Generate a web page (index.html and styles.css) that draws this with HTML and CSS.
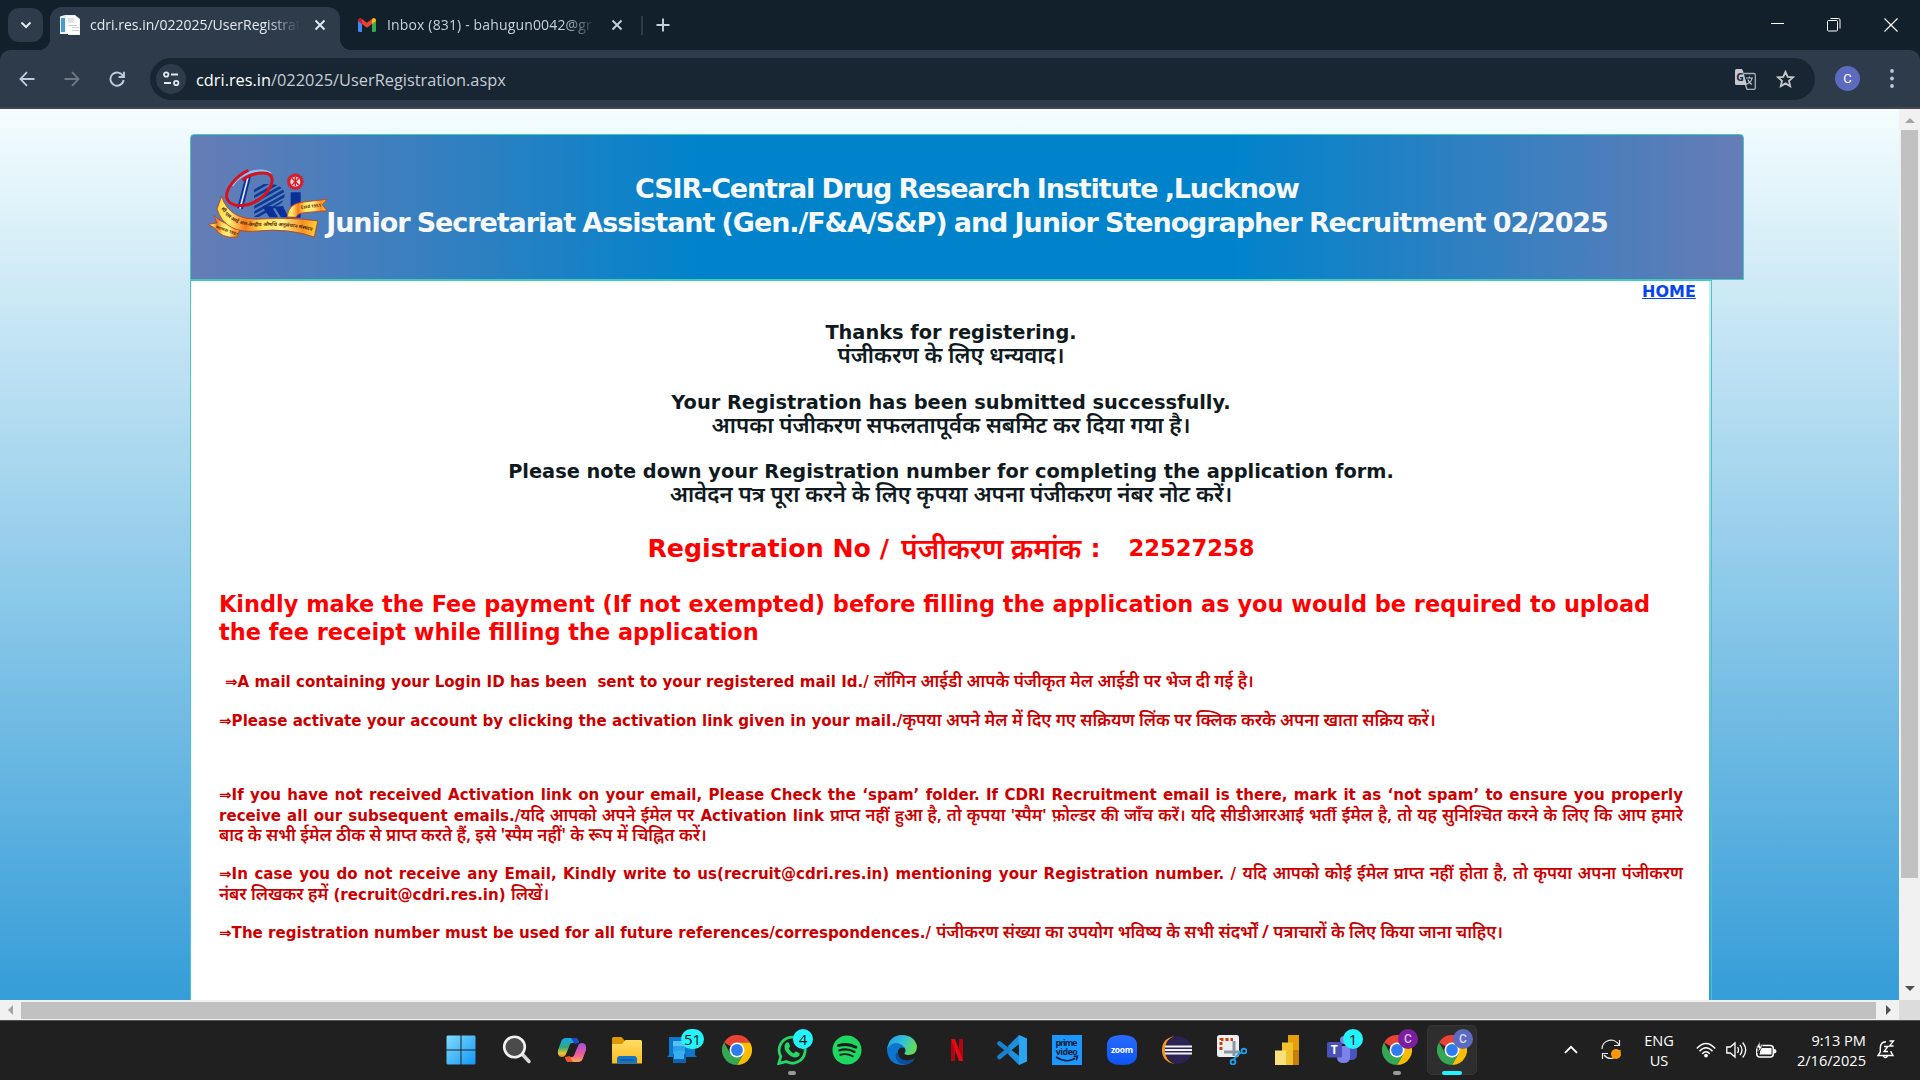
FILE: index.html
```html
<!DOCTYPE html>
<html lang="en">
<head>
<meta charset="utf-8">
<title>cdri.res.in/022025/UserRegistration.aspx</title>
<link rel="stylesheet" href="styles.css">
</head>
<body>
<svg class="defs" aria-hidden="true">
  <defs>
    <symbol id="chrome" viewBox="0 0 30 30">
      <path fill="#e94335" d="M15 15 2 7.5A15 15 0 0 1 28 7.5H15z"/>
      <path fill="#fbbc04" d="M28 7.5A15 15 0 0 1 15 30L21.5 18.700 15 7.500z"/>
      <path fill="#34a853" d="M2 7.500A15 15 0 0 0 15 30L21.500 18.750 8.500 18.750z"/>
      <circle cx="15" cy="15" r="7.500" fill="#fff"/>
      <circle cx="15" cy="15" r="5.900" fill="#2f7bf0"/>
    </symbol>
    <linearGradient id="winG" x1="0" y1="0" x2="1" y2="1"><stop offset="0" stop-color="#7fdcff"/><stop offset="1" stop-color="#1397f5"/></linearGradient>
    <linearGradient id="cpA" x1="0" y1="0" x2="0" y2="1"><stop offset="0" stop-color="#18a3e8"/><stop offset=".5" stop-color="#35a77c"/><stop offset=".8" stop-color="#e8c733"/><stop offset="1" stop-color="#f28a2c"/></linearGradient>
    <linearGradient id="cpB" x1="0" y1="0" x2="0" y2="1"><stop offset="0" stop-color="#a04fe6"/><stop offset=".6" stop-color="#ee5d94"/><stop offset="1" stop-color="#fba55e"/></linearGradient>
    <linearGradient id="foldG" x1="0" y1="0" x2="0" y2="1"><stop offset="0" stop-color="#ffdc63"/><stop offset="1" stop-color="#fbbd1e"/></linearGradient>
    <linearGradient id="edgeG" x1="0" y1="0" x2="1" y2="0.300"><stop offset="0" stop-color="#1b9de2"/><stop offset=".6" stop-color="#35c1d8"/><stop offset="1" stop-color="#62dc58"/></linearGradient>
    <linearGradient id="zoomG" x1="0" y1="0" x2="0" y2="1"><stop offset="0" stop-color="#2a6bff"/><stop offset="1" stop-color="#0b55f5"/></linearGradient>
    <linearGradient id="ribG" x1="0" y1="0" x2="1" y2="0"><stop offset="0" stop-color="#ffd83a"/><stop offset=".12" stop-color="#fff07a"/><stop offset=".28" stop-color="#f57c1c"/><stop offset=".45" stop-color="#ffe45c"/><stop offset=".65" stop-color="#fff08a"/><stop offset=".85" stop-color="#f78f1e"/><stop offset="1" stop-color="#ffd83a"/></linearGradient>
    <clipPath id="rClip"><path d="M177 87h50c26 0 42 16 42 32 0 18-12 30-28 34l38 34H178z"/></clipPath>
  </defs>
</svg>

<div class="window">
  <header class="tabstrip">
    <button class="tabsearch"><svg width="12" height="8" viewBox="0 0 12 8"><path d="M1.500 1.500 6 6l4.500-4.500" fill="none" stroke="#e3e9ef" stroke-width="2"/></svg></button>
    <div class="tab active">
      <svg class="fav" width="20" height="20" viewBox="0 0 20 20"><path fill="#eef1f3" d="M0 1.500L5 0h10l5 4v16H8v-1H0z"/><path fill="#4a9ad0" d="M1 3h4v14H1z"/><path fill="#fff" d="M6 1h9l4 4v14H8v-2H6z"/><path fill="#dfe3e7" d="M8 3h6v5H8z"/><path fill="#c9d0d6" d="M8 10h9v1H8zM12 12h7v1h-7zM12 15h7v1h-7z"/></svg>
      <span class="label">cdri.res.in/022025/UserRegistrat</span>
      <svg class="x" width="12" height="12" viewBox="0 0 12 12"><path d="M1.500 1.500l9 9m0-9l-9 9" stroke="#e3e9ef" stroke-width="1.900"/></svg>
    </div>
    <div class="tab">
      <svg class="fav gm" width="18" height="14" viewBox="0 0 18 14"><path fill="#4285f4" d="M0 2v10.500Q0 14 1.500 14H4V5z"/><path fill="#34a853" d="M18 2v10.500q0 1.500-1.500 1.500H14V5z"/><path fill="#c5221f" d="M0 2.500Q0 0 2.500 0L4 1v5L0 3z"/><path fill="#fbbc04" d="M18 2.500Q18 0 15.500 0L14 1v5l4-3z"/><path fill="#ea4335" d="M4 1l5 3.800L14 1v5L9 9.800 4 6z"/></svg>
      <span class="label dim">Inbox (831) - bahugun0042@gr</span>
      <svg class="x" width="12" height="12" viewBox="0 0 12 12"><path d="M1.500 1.500l9 9m0-9l-9 9" stroke="#c5d2de" stroke-width="1.900"/></svg>
    </div>
    <i class="tabdiv"></i>
    <svg class="plus" width="14" height="14" viewBox="0 0 14 14"><path d="M7 .5v13M.5 7h13" stroke="#c5d2de" stroke-width="1.900"/></svg>
    <div class="winctl">
      <svg width="13" height="13" viewBox="0 0 13 13"><path d="M0 5.500h13" stroke="#fff"/></svg>
      <svg width="14" height="14" viewBox="0 0 14 14"><path d="M.5 3.500q0-1 1-1H9.500q1 0 1 1v8.500q0 1-1 1H1.500q-1 0-1-1zM3.500.5H11.500q1.500 0 1.500 1.500V10.500" fill="none" stroke="#fff"/></svg>
      <svg width="14" height="14" viewBox="0 0 14 14"><path d="M.5.5l13 13m0-13l-13 13" stroke="#fff" stroke-width="1.200"/></svg>
    </div>
  </header>

  <nav class="toolbar">
    <svg class="nb" width="16" height="16" viewBox="0 0 16 16"><path d="M15.500 8H1.500M8 1.200 1.400 8 8 14.800" fill="none" stroke="#b9cbdd" stroke-width="1.800"/></svg>
    <svg class="nb" width="16" height="16" viewBox="0 0 16 16"><path d="M.5 8h14M8 1.200 14.600 8 8 14.800" fill="none" stroke="#6d7883" stroke-width="1.800"/></svg>
    <svg class="nb" width="16" height="16" viewBox="0 0 16 16"><path d="M14 5.200A6.600 6.600 0 1 0 14.600 9M15 .8V6H9.600" fill="none" stroke="#b9cbdd" stroke-width="1.900"/></svg>
    <div class="omnibox">
      <span class="site"><svg width="17" height="16" viewBox="0 0 17 16"><g fill="none" stroke="#e3e9ef" stroke-width="1.800"><circle cx="3.200" cy="3.500" r="2.200"/><path d="M8 3.500h7M1 12h7"/><circle cx="13.200" cy="12" r="2.200"/></g></svg></span>
      <span class="url"><b>cdri.res.in</b>/022025/UserRegistration.aspx</span>
      <svg class="gt" width="21" height="21" viewBox="0 0 21 21"><path fill="none" stroke="#a9b0b7" stroke-width="1.300" d="M9 4.500h10q1.300 0 1.300 1.300V19q0 1.300-1.300 1.300h-7L8 8"/><path fill="#c7c8cc" d="M1.500 0H7l1 2 4 14H1.500Q0 16 0 14.500v-13Q0 0 1.500 0z"/><text x="1.300" y="12" font-family="Open Sans" font-weight="700" font-size="10.500" fill="#182633">G</text><path d="M11 9h7m-3.500-1.500V9m2.500 0q-.5 4-5 6m.8-4.500q1 3.200 4.200 5" fill="none" stroke="#c7c8cc" stroke-width="1.100"/></svg>
      <svg class="star" width="19" height="18" viewBox="0 0 19 18"><path d="M9.500 1.800l2.200 5 5.400.5-4.100 3.600 1.200 5.300-4.700-2.800-4.700 2.800L6 10.900 1.900 7.300l5.400-.5z" fill="none" stroke="#c7c8cc" stroke-width="1.800"/></svg>
    </div>
    <span class="avatar">C</span>
    <svg class="dots" width="4" height="19" viewBox="0 0 4 19" fill="#b9cbdd"><circle cx="2" cy="2" r="1.900"/><circle cx="2" cy="9.500" r="1.900"/><circle cx="2" cy="17" r="1.900"/></svg>
  </nav>

  <div class="viewport">
    <main class="page">
      <div class="banner">
        <svg class="logo" width="150" height="100" viewBox="0 0 450 300">
          <g clip-path="url(#rClip)"><path d="M170 112l60-34M172 128l90-50M172 144l98-55M172 160l104-58M172 176l108-60M172 192l112-63" stroke="#0e3a96" stroke-width="8"/></g>
          <path fill="#0b2f9a" d="M203 155l26-2 20 34h-26zM238 155l26-2 16 34h-22zM287 112h30v76h-30z"/>
          <path d="M153 68l-24 92M165 66l-24 96" stroke="#0b2f9a" stroke-width="5"/><path d="M159 67l-24 94" stroke="#e8f0ff" stroke-width="4"/>
          <path d="M112 92C136 52 196 36 228 56" fill="none" stroke="#8ec5f5" stroke-width="7"/>
          <path d="M160 46C124 62 88 104 96 130c10 32 76 28 112-10 32-34 32-66-4-66-24 0-48 10-62 22" fill="none" stroke="#d8101c" stroke-width="9"/>
          <circle cx="301" cy="80" r="23" fill="#d81e2c" stroke="#d81e2c" stroke-width="5" stroke-dasharray="4 3"/><circle cx="301" cy="80" r="15" fill="#f6d9dc"/><path d="M291 70l20 20m0-20l-20 20M301 66v28" stroke="#d81e2c" stroke-width="4"/>
          <path fill="url(#ribG)" stroke="#c23a10" stroke-width="2.500" d="M276 186q4-42 50-45l70-8-14 16 14 18-68 6q-22 2-24 14z"/>
          <path fill="url(#ribG)" stroke="#c23a10" stroke-width="2.500" d="M58 182q30 32 78 30l-8 34q-50 6-70-28L40 208l26-4z"/>
          <path fill="url(#ribG)" stroke="#c23a10" stroke-width="2.500" d="M80 124q22 74 120 68 90-6 168 6l-10 48q-80-28-170-18Q90 238 66 162z"/>
          <path id="rib" d="M78 160q30 54 112 54 90-6 168 16" fill="none"/>
          <text class="ribtext" font-size="15"><textPath href="#rib">सी एस आई आर-केन्द्रीय औषधि अनुसंधान संस्थान</textPath></text>
          <text class="ribtext" font-size="13" transform="rotate(20 64 218)" x="62" y="220">स्थापना 1951</text>
          <text class="ribtext" font-size="13" transform="rotate(-6 322 162)" x="318" y="161">Estd 1951</text>
        </svg>
        <h1><span class="t1">CSIR-Central Drug Research Institute ,Lucknow</span><span class="t2">Junior Secretariat Assistant (Gen./F&amp;A/S&amp;P) and Junior Stenographer Recruitment 02/2025</span></h1>
      </div>

      <div class="panel"><div class="sheet">
        <a class="home" href="#">HOME</a>
        <div class="msg"><p>Thanks for registering.</p><p class="hi">पंजीकरण के लिए धन्यवाद।</p></div>
        <div class="msg"><p>Your Registration has been submitted successfully.</p><p class="hi">आपका पंजीकरण सफलतापूर्वक सबमिट कर दिया गया है।</p></div>
        <div class="msg"><p>Please note down your Registration number for completing the application form.</p><p class="hi">आवेदन पत्र पूरा करने के लिए कृपया अपना पंजीकरण नंबर नोट करें।</p></div>
        <div class="reg"><span>Registration No /</span><span class="rhi">पंजीकरण क्रमांक</span><span class="colon">:</span><span class="num">22527258</span></div>
        <div class="fee">Kindly make the Fee payment (If not exempted) before filling the application as you would be required to upload<br>the fee receipt while filling the application</div>
        <div class="note first">⇒A mail containing your Login ID has been&nbsp; sent to your registered mail Id./ <span>लॉगिन आईडी आपके पंजीकृत मेल आईडी पर भेज दी गई है।</span></div>
        <div class="note">⇒Please activate your account by clicking the activation link given in your mail./<span>कृपया अपने मेल में दिए गए सक्रियण लिंक पर क्लिक करके अपना खाता सक्रिय करें।</span></div>
        <div class="note gap">
          <div class="full">⇒If you have not received Activation link on your email, Please Check the ‘spam’ folder. If CDRI Recruitment email is there, mark it as ‘not spam’ to ensure you properly</div>
          <div class="full">receive all our subsequent emails./<span>यदि आपको अपने ईमेल पर</span> Activation link <span>प्राप्त नहीं हुआ है, तो कृपया 'स्पैम' फ़ोल्डर की जाँच करें। यदि सीडीआरआई भर्ती ईमेल है, तो यह सुनिश्चित करने के लिए कि आप हमारे</span></div>
          <div><span>बाद के सभी ईमेल ठीक से प्राप्त करते हैं, इसे 'स्पैम नहीं' के रूप में चिह्नित करें।</span></div>
        </div>
        <div class="note case">
          <div class="full">⇒In case you do not receive any Email, Kindly write to us(recruit@cdri.res.in) mentioning your Registration number. / <span>यदि आपको कोई ईमेल प्राप्त नहीं होता है, तो कृपया अपना पंजीकरण</span></div>
          <div><span>नंबर लिखकर हमें</span> (recruit@cdri.res.in) <span>लिखें।</span></div>
        </div>
        <div class="note">⇒The registration number must be used for all future references/correspondences./ <span>पंजीकरण संख्या का उपयोग भविष्य के सभी संदर्भों / पत्राचारों के लिए किया जाना चाहिए।</span></div>
      </div></div>
    </main>
    <div class="vbar"><i class="up"></i><i class="vthumb"></i><i class="down"></i></div>
  </div>
  <div class="hbar"><i class="left"></i><i class="hthumb"></i><i class="right"></i><i class="corner"></i></div>

  <footer class="taskbar">
    <div class="apps">
      <span class="app win"><svg width="30" height="30" viewBox="0 0 30 30"><path fill="url(#winG)" d="M1.500.5H14.500V14.500H.5V1.500zM15.500.5H28.500l1 1v13h-14zM.5 15.500h14v14H1.500l-1-1zM15.500 15.500h14v13l-1 1h-13z"/></svg></span>
      <span class="app"><svg width="30" height="30" viewBox="0 0 30 30"><path d="M20 19l7 7.500" stroke="#d5d9dd" stroke-width="3.500" stroke-linecap="round"/><circle cx="12.500" cy="12" r="10.300" fill="#4b4b4b" stroke="#f2f2f2" stroke-width="2.600"/></svg></span>
      <span class="app"><svg width="30" height="30" viewBox="0 0 30 30"><path fill="url(#cpA)" d="M9 3h9q3 0 4 5l-7 0q-2 0-3 4l-3 7q-1 3-4 3-5 0-4-7L4 7q1-4 5-4z"/><path fill="#1c46cf" d="M16 3h2q3 0 4 5l-5 1q-1-4-3-6z"/><path fill="url(#cpB)" d="M21 27h-9q-3 0-4-5l7 0q2 0 3-4l3-7q1-3 4-3 5 0 4 7l-3 8q-1 4-5 4z"/><path fill="#f0552b" d="M14 27h-2q-3 0-4-5l5-1q1 4 3 6z"/></svg></span>
      <span class="app"><svg width="30" height="30" viewBox="0 0 30 30"><path fill="#dc9a06" d="M0 3.500Q0 2 1.500 2h8l3.500 4v4H0z"/><path fill="url(#foldG)" d="M0 9h10l3.500-4H28.500Q30 5 30 6.500V28.500H0z"/><path fill="#1174c6" d="M5 28.500V24q0-3 3-3h14q3 0 3 3v4.500z"/><path d="M8 25h14" stroke="#0a4d8c"/></svg></span>
      <span class="app"><svg width="30" height="30" viewBox="0 0 30 30"><path fill="#1078cc" d="M2 2h26v18l2 2H0l2-2z"/><path fill="#29a4ec" d="M6 6h12v13H6z"/><path fill="#52c3f8" d="M6 6h12v5H6z"/><path fill="#0d62b0" d="M6 19h13v9H6z"/><path fill="#36b0f0" d="M7 16h10v8H7z"/></svg><b class="badge wide">51</b></span>
      <span class="app"><svg width="30" height="30"><use href="#chrome"/></svg></span>
      <span class="app"><svg width="30" height="30" viewBox="0 0 30 30"><path d="M1.800 28.500l2-7A13 13 0 1 1 9 26.600z" fill="none" stroke="#25d366" stroke-width="2.800"/><path fill="#25d366" d="M9.500 7.500q1.500-1 2.500.8l1 2.700q.3.900-1.300 2.500 2 3.800 5 5 1.700-2.300 2.500-1.900l3 1.500q1 .8 0 2.700-3 3.500-8.500.2Q7 16.500 7.500 11q.4-2.400 2-3.500z"/></svg><b class="badge r">4</b><i class="run"></i></span>
      <span class="app"><svg width="30" height="30" viewBox="0 0 30 30"><circle cx="15" cy="15" r="14.500" fill="#1ed760"/><g fill="none" stroke="#1b1b1b" stroke-linecap="round"><path d="M6.500 10.500q9.500-2.700 17.500 1.700" stroke-width="2.800"/><path d="M7.500 15.300q8-2.300 15 1.600" stroke-width="2.300"/><path d="M8.200 19.800q6.800-1.800 12.500 1.500" stroke-width="1.900"/></g></svg></span>
      <span class="app"><svg width="30" height="30" viewBox="0 0 30 30"><path fill="#0c76cf" d="M0 15Q1 7 9 7t9 6l-4-.5q-4 2-3 7 2 7 10 6.500l5 0Q21 30 15 30 1 29 0 15z"/><path fill="url(#edgeG)" d="M0 14.500Q2 0 15 0q13 .5 15 11.500 0 8-8 8.500-5 0-4.500-2 2-2 0-5.500Q14 8 9 8 3 8.500 0 14.500z"/><path fill="#0b4fa0" d="M10.500 17q0 6.500 6 8 6 1.500 11.500-2-3 6-11 6.500-8-1.500-8.500-8.500 0-3 2-4z"/></svg></span>
      <span class="app"><svg width="12" height="22" viewBox="0 0 12 22"><path fill="#b1060f" d="M0 0h4v22H0zM8 0h4v22H8z"/><path fill="#e50914" d="M0 0h4l8 22H8z"/></svg></span>
      <span class="app"><svg width="30" height="30" viewBox="0 0 30 30"><path d="M22 6L2.500 22M22 24L2.500 8.500" stroke="#1482cf" stroke-width="4.600" stroke-linecap="round"/><path fill="#2aa5f2" d="M22 0l8 3.500v23L22 30z"/><path fill="#1c8fdd" d="M22 0v9L14 15l-3-4zM22 30v-9L14 15l-3 4z"/></svg></span>
      <span class="app"><svg width="30" height="30" viewBox="0 0 30 30"><path fill="#1a98ff" d="M0 0h30v30H0z"/><g font-family="Open Sans" font-weight="700" font-size="8.800" fill="#0b1d38"><text x="3.500" y="10.500" textLength="22">prime</text><text x="3.800" y="19.500" textLength="22">video</text></g><path d="M4 22q10 6.500 19 1.500m-1.500-2l4-.3-1.200 4" fill="none" stroke="#0b1d38" stroke-width="1.500"/></svg></span>
      <span class="app"><svg width="30" height="30" viewBox="0 0 30 30"><path fill="url(#zoomG)" d="M15 0Q30 0 30 10v10q0 10-15 10T0 20V10Q0 0 15 0z"/><text x="4" y="18" font-family="Open Sans" font-weight="700" font-size="8.500" fill="#fff" textLength="22">zoom</text></svg></span>
      <span class="app"><svg width="30" height="30" viewBox="0 0 30 30"><path fill="#f7941e" d="M13 1Q0 3 0 15t13 14Q3 26 3 15T13 1z"/><circle cx="16.500" cy="15" r="13.500" fill="#2c2255"/><path d="M3 11.500h27M3 15h27M3 18.500h27" stroke="#f3f1fa" stroke-width="1.800"/></svg></span>
      <span class="app"><svg width="30" height="30" viewBox="0 0 30 30"><rect width="22" height="22" rx="2.500" fill="#eceff1"/><path d="M4 15V4.500h12" fill="none" stroke="#d83b01" stroke-width="3" stroke-dasharray="3 2"/><path d="M17 6v15M7 17h16" stroke="#8b98a4" stroke-width="3"/><g fill="none" stroke="#1ba1f2" stroke-width="1.800"><circle cx="27" cy="16" r="2.400"/><circle cx="16" cy="27" r="2.400"/><path d="M17 24.500l4-5 3.500-2"/></g></svg></span>
      <span class="app"><svg width="24" height="30" viewBox="0 0 24 30"><path fill="#e3a008" d="M13 0h11v30H13z"/><path fill="#c67f0b" d="M18 15h6v15h-6z"/><path fill="#f2c12e" d="M7 7.500h11V30H7z"/><path fill="#fbe078" d="M0 15.500h11V30H0z"/></svg></span>
      <span class="app"><svg width="30" height="30" viewBox="0 0 30 30"><path fill="#4b53bc" d="M20 12h9q1 0 1 1v6q0 6-6 6h-4z"/><path fill="#7b83eb" d="M10 11h13v11q0 6-6.500 6T10 22z"/><circle cx="17" cy="5" r="4" fill="#7b83eb"/><rect y="7" width="15" height="15.500" rx="1.500" fill="#4a52b8"/><text x="3.700" y="19" font-family="Open Sans" font-weight="700" font-size="12" fill="#fff">T</text></svg><b class="badge r">1</b></span>
      <span class="app"><svg width="30" height="30"><use href="#chrome"/></svg><b class="badge r purple">C</b><i class="run"></i></span>
      <span class="app on"><svg width="30" height="30"><use href="#chrome"/></svg><b class="badge r indigo">C</b><i class="run wide"></i></span>
    </div>
    <div class="tray">
      <svg class="chev" width="14" height="9" viewBox="0 0 14 9"><path d="M1 7.800 7 1.800l6 6" fill="none" stroke="#fff" stroke-width="1.900"/></svg>
      <svg class="sync" width="21" height="21" viewBox="0 0 21 21"><path d="M1 10A9 9 0 0 1 18 6M18.500 1v5.500H13M19 11A9 9 0 0 1 3 16M1.500 20v-5.500H7" fill="none" stroke="#e8e8e8" stroke-width="1.200"/><circle cx="15" cy="15" r="5" fill="#ff9800"/></svg>
      <span class="lang">ENG<br>US</span>
      <svg class="wifi" width="20" height="16" viewBox="0 0 20 16"><g fill="none" stroke="#fff" stroke-width="1.400"><path d="M.8 6.500Q10-3.500 19.200 6.500M3.500 9.200q6.500-7 13 0M6.200 11.800q3.800-4 7.600 0"/></g><circle cx="10" cy="13.600" r="1.900" fill="#fff"/></svg>
      <svg class="vol" width="21" height="18" viewBox="0 0 21 18"><g fill="none" stroke="#fff" stroke-width="1.300"><path d="M.8 6v6h3.500L9 16V2L4.300 6zM11.500 6q2 3 0 6M14 3.800q4 5.200 0 10.400M16.700 1.500q6 7.500 0 15"/></g></svg>
      <svg class="bat" width="21" height="17" viewBox="0 0 21 17"><rect x=".8" y="4.500" width="16.500" height="11.500" rx="3" fill="none" stroke="#fff" stroke-width="1.500"/><path fill="#fff" d="M5 7h10.500v6.500H3.500zM18 8q2.500 0 2.500 2.200T18 12.500z"/><path fill="#fff" stroke="#202020" stroke-width=".8" d="M4 0 0 7h3l-1.500 5L7 5H4z"/></svg>
      <span class="clock">9:13 PM<br>2/16/2025</span>
      <svg class="bell" width="18" height="19" viewBox="0 0 18 19"><path d="M9 1.800Q3.300 2 3.300 8v4L1 15.500h15L14 12v-1M6.500 16q1.500 3.300 4 0" fill="none" stroke="#fff" stroke-width="1.400"/><path d="M7 6.500h4l-4 5h4M12.500 1h4l-4 5h4" fill="none" stroke="#fff" stroke-width="1.300"/></svg>
    </div>
  </footer>
</div>
</body>
</html>
```
FILE: styles.css
```css
*{box-sizing:border-box}
body{margin:0;width:1920px;height:1080px;overflow:hidden;font-family:"Open Sans","Noto Sans",sans-serif}
svg{display:block;flex:none}
p,h1{margin:0}
.defs{position:absolute;width:0;height:0}
.window{display:flex;flex-direction:column;width:1920px;height:1080px;background:#12202c}

/* tab strip */
.tabstrip{height:50px;display:flex;align-items:flex-start;padding-left:8px}
.tabsearch{width:35px;height:34px;margin:8px 7px 0 0;border:0;border-radius:11px;background:#2d3b4b;display:flex;align-items:center;justify-content:center;padding:0}
.tab{display:flex;align-items:center;height:43px;margin-top:7px;width:290px;padding:0 0 7px 10px;border-radius:12px 12px 0 0;position:relative}
.tab.active{background:#2d3b4b}
.tab.active::before,.tab.active::after{content:"";position:absolute;bottom:0;width:12px;height:12px}
.tab.active::before{left:-12px;background:radial-gradient(circle at 0 0,transparent 12px,#2d3b4b 12.5px)}
.tab.active::after{right:-12px;background:radial-gradient(circle at 100% 0,transparent 12px,#2d3b4b 12.5px)}
.tab .gm{margin:0 1px 0 8px}
.label{width:210px;margin-left:10px;font-size:14px;line-height:20px;white-space:nowrap;color:#e3e9ef;-webkit-mask-image:linear-gradient(90deg,#000 84%,transparent);mask-image:linear-gradient(90deg,#000 84%,transparent)}
.label.dim{color:#c5d2de;letter-spacing:.15px}
.tab .x{margin-left:14px}
.tabdiv{width:2px;height:19px;margin:16px 0 0 11px;background:#2d3b4b}
.plus{margin:18px 0 0 13px}
.winctl{margin-left:auto;display:flex;gap:43px;padding:18px 22px 0 0}

/* toolbar */
.toolbar{height:59px;background:#2d3b4b;border-bottom:2px solid #46444c;border-radius:10px 10px 0 0;display:flex;align-items:center;padding:0 26px 0 19px;flex:none}
.nb{margin-right:29px}
.nb:nth-child(3){margin-right:25px}
.omnibox{width:1665px;height:42px;margin-top:1px;border-radius:21px;background:#182633;display:flex;align-items:center;padding:0 20px 0 6px}
.site{width:30px;height:30px;border-radius:50%;background:#2d3b4b;display:flex;align-items:center;justify-content:center}
.url{flex:1;margin:1px 0 0 10px;font-size:16.35px;line-height:24px;color:#c6cdd4}
.url b{font-weight:400;color:#fff}
.star{margin-left:20px}
.avatar{width:25px;height:25px;margin-left:20px;border-radius:50%;background:#5c6bc0;color:#fff;font:400 13px/25px Roboto,sans-serif;text-align:center}
.dots{margin-left:auto}

/* page viewport */
.viewport{height:891px;display:flex;flex:none}
.page{width:1899px;height:891px;overflow:hidden;padding:25px 0 0 190px;background:linear-gradient(#f4fdfe,#359dd8)}
.banner{width:1554px;height:146px;border:1px solid #43cabd;border-radius:4px 4px 0 0;background:linear-gradient(90deg,#667cb6,#0083cb 33%,#0083cb 67%,#667cb6);display:grid}
.banner>*{grid-area:1/1}
.logo{margin:20px 0 0 4px}
.ribtext{font-family:"Noto Sans",sans-serif;font-weight:700;fill:#5a2a08}
h1{font:700 27px/34px "DejaVu Sans",sans-serif;color:#f6f8fc;text-align:center;padding-top:37px;display:flex;flex-direction:column;white-space:nowrap}
.t1{letter-spacing:-1.14px;word-spacing:-1px}
.t2{letter-spacing:-1.08px;word-spacing:-1px}
.panel{width:1522px;height:720px;border:1px solid #43cabd;border-bottom:0;padding-right:2px}
.sheet{background:#fff;height:100%;padding:1px 26px 0 28px;font:700 19.38px/24px "DejaVu Sans","Noto Sans",sans-serif;color:#0f1a1e;white-space:nowrap}
.home{display:block;width:54px;margin:0 0 19px auto;position:relative;left:13px;font-size:16px;line-height:20px;color:#0645f0}
.msg{text-align:center;height:48px;margin-bottom:21.5px}
.hi,.rhi,.note span{font-family:"Noto Sans",sans-serif;font-weight:600}
.msg .hi{font-size:22.25px;line-height:20px}
.reg{display:flex;justify-content:center;margin-top:25px;font-size:25.3px;line-height:32px;color:#f00}
.rhi{font-size:28px;line-height:31px;margin-left:12px}
.colon{margin-left:9px}
.num{font-size:22.66px;line-height:31px;margin-left:28px}
.fee{margin-top:25px;font-size:22.43px;line-height:28px;color:#f00}
.note{margin-top:18px;font-size:15.07px;line-height:20.6px;color:#c00}
.note span{font-size:17.05px;line-height:0}
.note.first{margin-top:26px;padding-left:6px}
.note.gap{margin-top:54px}
.note.case{margin-top:17px}
.full{text-align:justify;text-align-last:justify;white-space:normal;height:20.6px;width:1464px}
.full span{font-size:16.8px}

/* scrollbars */
.vbar{width:21px;background:#f1f1f1;display:flex;flex-direction:column;align-items:center}
.up,.down{border:5px solid transparent}
.up{border-bottom-color:#a3a3a3;border-top:0;margin:9px 0 7px}
.vthumb{width:17px;height:748px;background:#c1c1c1}
.down{border-top-color:#505050;border-bottom:0;margin-top:108px}
.hbar{height:20px;flex:none;background:#f1f1f1;display:flex;align-items:center}
.left,.right{border:5px solid transparent}
.left{border-right-color:#a3a3a3;border-left:0;margin:0 8px}
.hthumb{width:1855px;height:17px;background:#c1c1c1}
.right{border-left-color:#505050;border-right:0;margin:0 8px 0 10px}
.corner{width:21px;height:20px;background:#dcdcdc}

/* taskbar */
.taskbar{height:60px;flex:none;background:#202020;border-top:1px solid #505354;display:flex;align-items:center;padding-left:434px}
.apps{display:flex}
.app{width:55px;height:59px;padding-bottom:1px;display:flex;align-items:center;justify-content:center;position:relative}
.app.win{padding-right:2px}
.app.on::before{content:"";position:absolute;inset:4px 2px 5px 3px;border-radius:5px;background:#2e2e2e;border:1px solid #353535}
.app svg{position:relative}
.badge{position:absolute;top:8px;left:27px;width:23px;height:20px;border-radius:10px;background:#22f3fd;color:#111;font:400 15px/20px "Open Sans",sans-serif;text-align:center}
.badge.r{left:29px;width:20px}
.badge.purple{background:#7b1fa2;color:#d7bfe2;font:500 12px/20px Roboto,sans-serif}
.badge.indigo{background:#5c6bc0;color:#d9ddf2;font:500 12px/20px Roboto,sans-serif}
.run{position:absolute;bottom:5px;left:24px;width:8px;height:4px;border-radius:2px;background:#9a9a9a}
.run.wide{left:18px;width:20px;background:#22f3fd}
.tray{flex:1;display:flex;align-items:center;color:#fff;font-size:14.6px;line-height:20px;padding:0 0 2px 85px}
.sync{margin-left:23px}
.lang{width:40px;margin-left:17px;text-align:center}
.wifi{margin-left:17px}
.vol{margin-left:10px}
.bat{margin-left:9px}
.clock{width:80px;margin-left:9px;text-align:right}
.bell{margin-left:11px}
```
